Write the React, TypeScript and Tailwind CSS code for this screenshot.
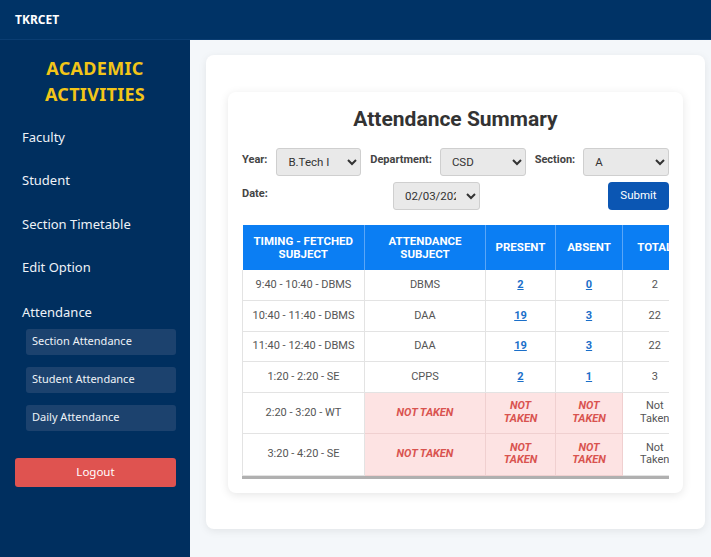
import React from "react";

type Row = {
  timing: string;
  subject: string;
  present?: number;
  absent?: number;
  total?: number;
};

const rows: Row[] = [
  { timing: "9:40 - 10:40 - DBMS", subject: "DBMS", present: 2, absent: 0, total: 2 },
  { timing: "10:40 - 11:40 - DBMS", subject: "DAA", present: 19, absent: 3, total: 22 },
  { timing: "11:40 - 12:40 - DBMS", subject: "DAA", present: 19, absent: 3, total: 22 },
  { timing: "1:20 - 2:20 - SE", subject: "CPPS", present: 2, absent: 1, total: 3 },
  { timing: "2:20 - 3:20 - WT", subject: "" },
  { timing: "3:20 - 4:20 - SE", subject: "" },
];

const menu = ["Faculty", "Student", "Section Timetable", "Edit Option"];
const subMenu = ["Section Attendance", "Student Attendance", "Daily Attendance"];

const Sidebar = () => {
  return (
    <aside className="w-[190px] shrink-0 bg-[#002f5f] pt-[15px] font-['Noto_Sans',sans-serif] text-[#eef2f7]">
      <h2 className="text-center text-[18px] font-bold leading-[26px] tracking-[0.3px] text-[#f2c518]">
        ACADEMIC
        <br />
        ACTIVITIES
      </h2>
      <ul className="mt-[8.5px]">
        {menu.map((m) => (
          <li key={m} className="flex h-[43.5px] items-center pl-[22px] text-[13px]">
            {m}
          </li>
        ))}
        <li className="pt-[12px]">
          <div className="pl-[22px] text-[13px] leading-[20px]">Attendance</div>
          <div className="mt-[7px] flex flex-col gap-[12px] pl-[26px]">
            {subMenu.map((s) => (
              <div
                key={s}
                className="flex h-[26px] w-[150px] items-center rounded-[3px] bg-[#1c426e] px-[6px] text-[11px]"
              >
                {s}
              </div>
            ))}
          </div>
        </li>
      </ul>
      <div className="mt-[27px] pl-[15px]">
        <button className="h-[29px] w-[161px] rounded-[3px] bg-[#df5350] text-[11.5px] text-white">
          Logout
        </button>
      </div>
    </aside>
  );
};

const Select = ({ value, width }: { value: string; width: string }) => (
  <select
    className={`h-[28px] ${width} rounded-[3px] border border-[#cfcfcf] bg-[#e9e9e9] px-[7px] text-[11.5px] font-normal text-[#333]`}
    defaultValue={value}
  >
    <option>{value}</option>
  </select>
);

const AttendanceTable = () => {
  const th = "border-r border-[#5aa6f7] px-[6px] text-[11.5px] font-bold leading-[13px] text-white";
  const td = "border-b border-r border-[#e3e3e3] px-[5px] text-[11px] leading-[12.5px] text-[#555]";
  const nt = "border-b border-r border-[#f0d0d0] bg-[#fde3e3] px-[8px] text-[11px] font-bold italic leading-[12.5px] text-[#d9534f]";
  return (
    <div className="mt-[15px] overflow-x-auto border-b-[3px] border-[#b0b0b0]">
      <table className="w-[444px] table-fixed border-collapse text-center">
        <thead>
          <tr className="h-[45px] bg-[#0b7ef3]">
            <th className={`${th} w-[122px]`}>TIMING - FETCHED SUBJECT</th>
            <th className={`${th} w-[121px]`}>ATTENDANCE SUBJECT</th>
            <th className={`${th} w-[70px]`}>PRESENT</th>
            <th className={`${th} w-[67px]`}>ABSENT</th>
            <th className={`${th} w-[64px] border-r-0`}>TOTAL</th>
          </tr>
        </thead>
        <tbody>
          {rows.map((r) =>
            r.subject ? (
              <tr key={r.timing} className="h-[30.5px]">
                <td className={`${td} border-l`}>{r.timing}</td>
                <td className={td}>{r.subject}</td>
                <td className={td}>
                  <a href="#" className="font-bold text-[#1a6fc9] underline">
                    {r.present}
                  </a>
                </td>
                <td className={td}>
                  <a href="#" className="font-bold text-[#1a6fc9] underline">
                    {r.absent}
                  </a>
                </td>
                <td className={`${td} border-r-0`}>{r.total}</td>
              </tr>
            ) : (
              <tr key={r.timing} className="h-[41.5px]">
                <td className={`${td} border-l`}>{r.timing}</td>
                <td className={nt}>NOT TAKEN</td>
                <td className={nt}>NOT TAKEN</td>
                <td className={nt}>NOT TAKEN</td>
                <td className={`${td} border-r-0 px-[10px]`}>Not Taken</td>
              </tr>
            )
          )}
        </tbody>
      </table>
    </div>
  );
};

export default function App() {
  return (
    <div className="flex h-[557px] w-[711px] flex-col overflow-hidden font-['Roboto',sans-serif]">
      <header className="flex h-[40px] shrink-0 items-center border-b border-[#0a3d72] bg-[#003366] pl-[15px]">
        <span className="font-['Noto_Sans',sans-serif] text-[12px] font-bold text-white">TKRCET</span>
      </header>
      <div className="flex min-h-0 flex-1">
        <Sidebar />
        <main className="min-w-0 flex-1 bg-[#f4f7fa] pl-[16px] pr-[6px] pt-[15px]">
          <div className="rounded-[8px] bg-white px-[22px] pb-[36px] pt-[37px] shadow-[0_2px_8px_rgba(0,0,0,0.08)]">
            <div className="rounded-[8px] bg-white p-[14px] shadow-[0_2px_10px_rgba(0,0,0,0.1)]">
              <h1 className="text-center text-[21px] font-bold leading-[26px] text-[#333]">
                Attendance Summary
              </h1>
              <div className="mt-[16px] flex items-center text-[11px] font-bold text-[#444]">
                <label className="mr-[9px] -mt-[4px]">Year:</label>
                <Select value="B.Tech I" width="w-[87px]" />
                <label className="ml-[9px] mr-[8px] -mt-[4px]">Department:</label>
                <Select value="CSD" width="w-[88px]" />
                <label className="ml-[9px] mr-[8px] -mt-[4px]">Section:</label>
                <Select value="A" width="w-[88px]" />
              </div>
              <div className="mt-[6px] flex items-center text-[11px] font-bold text-[#444]">
                <label className="-mt-[4px] w-[151px]">Date:</label>
                <Select value="02/03/2025" width="w-[87px]" />
                <button className="ml-auto h-[28px] w-[61px] rounded-[4px] bg-[#0b56b3] text-[11.5px] font-normal text-white">
                  Submit
                </button>
              </div>
              <AttendanceTable />
            </div>
          </div>
        </main>
      </div>
    </div>
  );
}
